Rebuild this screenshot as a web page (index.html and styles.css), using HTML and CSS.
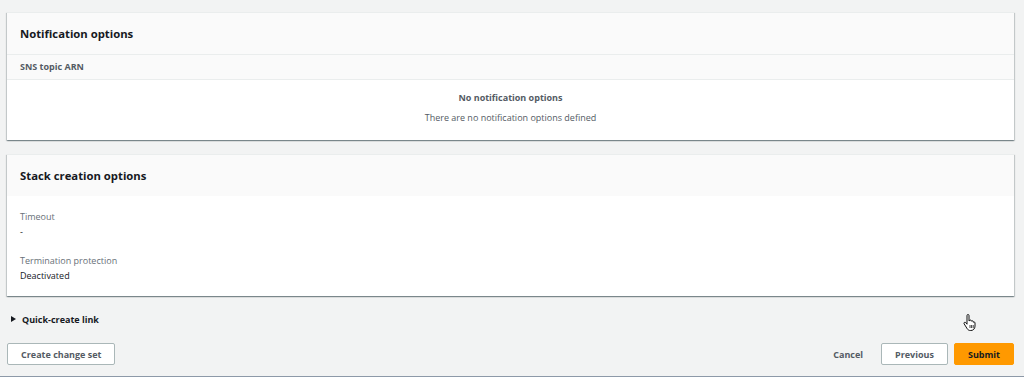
FILE: index.html
```html
<!DOCTYPE html>
<html lang="en">
<head>
  <meta charset="UTF-8">
  <title>Review stack</title>
  <link rel="stylesheet" href="styles.css">
</head>
<body>

  <div class="page">
    <div class="container">
      <div class="container-header">
        <h2>Notification options</h2>
      </div>
      <div class="table-head">SNS topic ARN</div>
      <div class="empty">
        <b>No notification options</b>
        <p>There are no notification options defined</p>
      </div>
    </div>

    <div class="container">
      <div class="container-header">
        <h2>Stack creation options</h2>
      </div>
      <div class="container-body">
        <div class="kv">
          <div class="kv-label">Timeout</div>
          <div class="kv-value">-</div>
        </div>
        <div class="kv">
          <div class="kv-label">Termination protection</div>
          <div class="kv-value">Deactivated</div>
        </div>
      </div>
    </div>

    <div class="expand">
      <span class="caret"></span>
      <span>Quick-create link</span>
    </div>

    <div class="actions">
      <button class="btn">Create change set</button>
      <div class="actions-right">
        <button class="btn-link">Cancel</button>
        <button class="btn">Previous</button>
        <button class="btn primary">Submit</button>
      </div>
    </div>

    <svg class="cursor" width="14" height="17" viewBox="0 0 14 17">
      <path d="M4 1.5c0-.6.4-1 1-1s1 .4 1 1V7l.3-.1c.1-.5.5-.9 1-.9s1 .4 1 1v.2c.2-.3.5-.5.9-.5.5 0 1 .4 1 1v.5c.2-.2.5-.3.8-.3.5 0 1 .4 1 1v3.2c0 2.4-1.700 4.4-4 4.4H7.3c-1.3 0-2.3-.6-3-1.6L1.1 9.8c-.3-.5-.2-1.1.3-1.4.4-.3 1-.2 1.3.2L4 10.2z" fill="#fff" stroke="#111" stroke-width="1"/>
      <path d="M7 11v3M8.6 11v3M10.2 11v3" stroke="#111" stroke-width=".8"/>
    </svg>
  </div>

</body>
</html>
```

FILE: styles.css
```css
body {
  margin: 0;
  background: #f2f3f3;
  font-family: 'Open Sans', Arial, sans-serif;
  color: #16191f;
  font-size: 10px;
}

.page {
  position: relative;
  height: 377px;
  box-sizing: border-box;
  padding: 12px 10px 0 7px;
  border-bottom: 1px solid #8d99a8;
}

.container {
  background: #fff;
  box-shadow: 0 1px 1px 0 rgba(0, 28, 36, 0.3), 1px 1px 1px 0 rgba(0, 28, 36, 0.15), -1px 1px 1px 0 rgba(0, 28, 36, 0.15);
  border-top: 1px solid #eaeded;
  margin-bottom: 14px;
}

.container-header {
  background: #fafafa;
  height: 41px;
  display: flex;
  align-items: center;
  padding: 0 13px;
}

.container-header h2 {
  margin: 0;
  font-size: 11.3px;
  font-weight: 700;
  color: #16191f;
}

.table-head {
  background: #fafafa;
  border-top: 1px solid #eaeded;
  border-bottom: 1px solid #eaeded;
  height: 24px;
  line-height: 24px;
  padding: 0 13px;
  font-weight: 700;
  font-size: 9px;
  color: #545b64;
}

.empty {
  height: 60px;
  display: flex;
  flex-direction: column;
  align-items: center;
  padding-top: 1px;
  box-sizing: border-box;
  color: #545b64;
  font-size: 9px;
}

.empty b {
  margin-top: 10px;
  line-height: 14px;
}

.empty p {
  margin: 6px 0 0;
  line-height: 14px;
}

.container-body {
  padding: 14px 13px 0;
  height: 86px;
}

.kv {
  margin-bottom: 15px;
}

.kv-label {
  color: #687078;
  font-size: 9px;
  line-height: 14px;
}

.kv-value {
  font-size: 9px;
  line-height: 14px;
  margin-top: 1px;
}

.expand {
  display: flex;
  align-items: center;
  gap: 6px;
  padding-left: 4px;
  margin-top: 16px;
  font-weight: 700;
  font-size: 9px;
  height: 14px;
}

.caret {
  width: 0;
  height: 0;
  border-top: 3.5px solid transparent;
  border-bottom: 3.5px solid transparent;
  border-left: 5px solid #16191f;
}

.actions {
  display: flex;
  justify-content: space-between;
  align-items: center;
  margin-top: 17px;
}

.actions-right {
  display: flex;
  align-items: center;
  gap: 6px;
}

.btn {
  font-family: inherit;
  font-size: 9px;
  font-weight: 700;
  color: #545b64;
  background: #fff;
  border: 1px solid #aab7b8;
  border-radius: 2px;
  height: 22px;
  padding: 0 13px;
  cursor: pointer;
}

.btn.primary {
  background: #ff9900;
  border-color: #ff9900;
  color: #16191f;
}

.btn-link {
  font-family: inherit;
  font-size: 9px;
  font-weight: 700;
  color: #545b64;
  background: none;
  border: none;
  padding: 0 12px 0 16px;
}

.cursor {
  position: absolute;
  left: 963px;
  top: 314px;
}
```
